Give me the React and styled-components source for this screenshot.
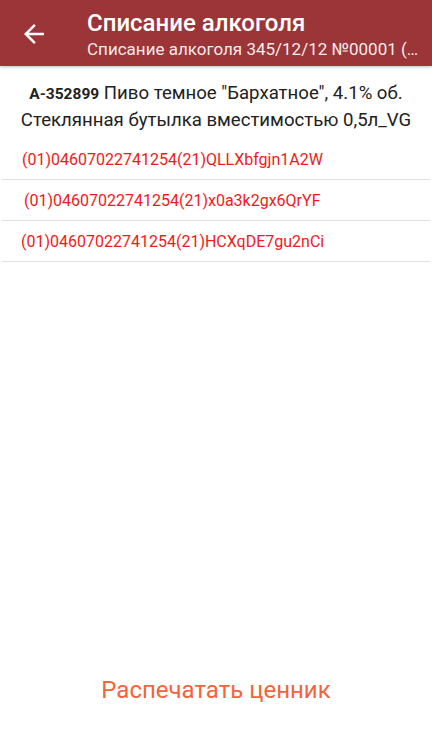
import React from 'react'
import styled, { createGlobalStyle } from 'styled-components'

const Global = createGlobalStyle`
  html, body {
    margin: 0;
    padding: 0;
    background: #ffffff;
  }
  body {
    font-family: Roboto, "Noto Sans", sans-serif;
  }
`

const Screen = styled.div`
  width: 432px;
  height: 739px;
  display: flex;
  flex-direction: column;
  background: #ffffff;
  overflow: hidden;
`

const Toolbar = styled.header`
  height: 66px;
  flex-shrink: 0;
  display: flex;
  align-items: center;
  background: #9b3538;
  color: #ffffff;
  box-shadow: 0 1px 3px rgba(0, 0, 0, 0.25);
  position: relative;
  z-index: 1;
`

const BackButton = styled.div`
  width: 87px;
  display: flex;
  align-items: center;
  padding-left: 19px;
  box-sizing: border-box;
  padding-top: 1px;
`

const Titles = styled.div`
  display: flex;
  flex-direction: column;
  min-width: 0;
  flex: 1;
  padding-top: 1px;
`

const Title = styled.div`
  font-size: 24px;
  font-weight: 500;
  line-height: 28px;
`

const Subtitle = styled.div`
  font-size: 17px;
  line-height: 20px;
  margin-top: 2px;
  white-space: nowrap;
  color: #f6eaea;
`

const Product = styled.div`
  padding: 14px 4px 0;
  text-align: center;
  font-size: 18.6px;
  line-height: 26px;
  color: #212121;
`

const Code = styled.b`
  font-size: 15.5px;
  font-weight: 700;
`

const List = styled.div`
  margin-top: 6px;
  display: flex;
  flex-direction: column;
`

const Row = styled.div`
  height: 40px;
  display: flex;
  align-items: center;
  padding-left: ${({ indent }) => indent}px;
  margin: 0 2px;
  border-bottom: 1px solid #e0e0e0;
  font-size: 16px;
  color: #f01a1a;
`

const Spacer = styled.div`
  flex: 1;
`

const PrintButton = styled.button`
  height: 80px;
  margin-bottom: 9px;
  border: none;
  background: transparent;
  font-family: Roboto, "Noto Sans", sans-serif;
  font-size: 24px;
  color: #f4633b;
  cursor: pointer;
`

const marks = [
  { code: '(01)04607022741254(21)QLLXbfgjn1A2W', indent: 20 },
  { code: '(01)04607022741254(21)x0a3k2gx6QrYF', indent: 22 },
  { code: '(01)04607022741254(21)HCXqDE7gu2nCi', indent: 19 }
]

export default function App() {
  return (
    <Screen>
      <Global />
      <Toolbar>
        <BackButton>
          <svg width="30" height="30" viewBox="0 0 24 24">
            <path
              d="M20 11H7.83l5.59-5.59L12 4l-8 8 8 8 1.41-1.41L7.83 13H20v-2z"
              fill="#ffffff"
            />
          </svg>
        </BackButton>
        <Titles>
          <Title>Списание алкоголя</Title>
          <Subtitle>Списание алкоголя 345/12/12 №00001 (…</Subtitle>
        </Titles>
      </Toolbar>
      <Product>
        <Code>А-352899</Code> Пиво темное "Бархатное", 4.1% об.
        <br />
        Стеклянная бутылка вместимостью 0,5л_VG
      </Product>
      <List>
        {marks.map(m => (
          <Row key={m.code} indent={m.indent}>{m.code}</Row>
        ))}
      </List>
      <Spacer />
      <PrintButton>Распечатать ценник</PrintButton>
    </Screen>
  )
}
